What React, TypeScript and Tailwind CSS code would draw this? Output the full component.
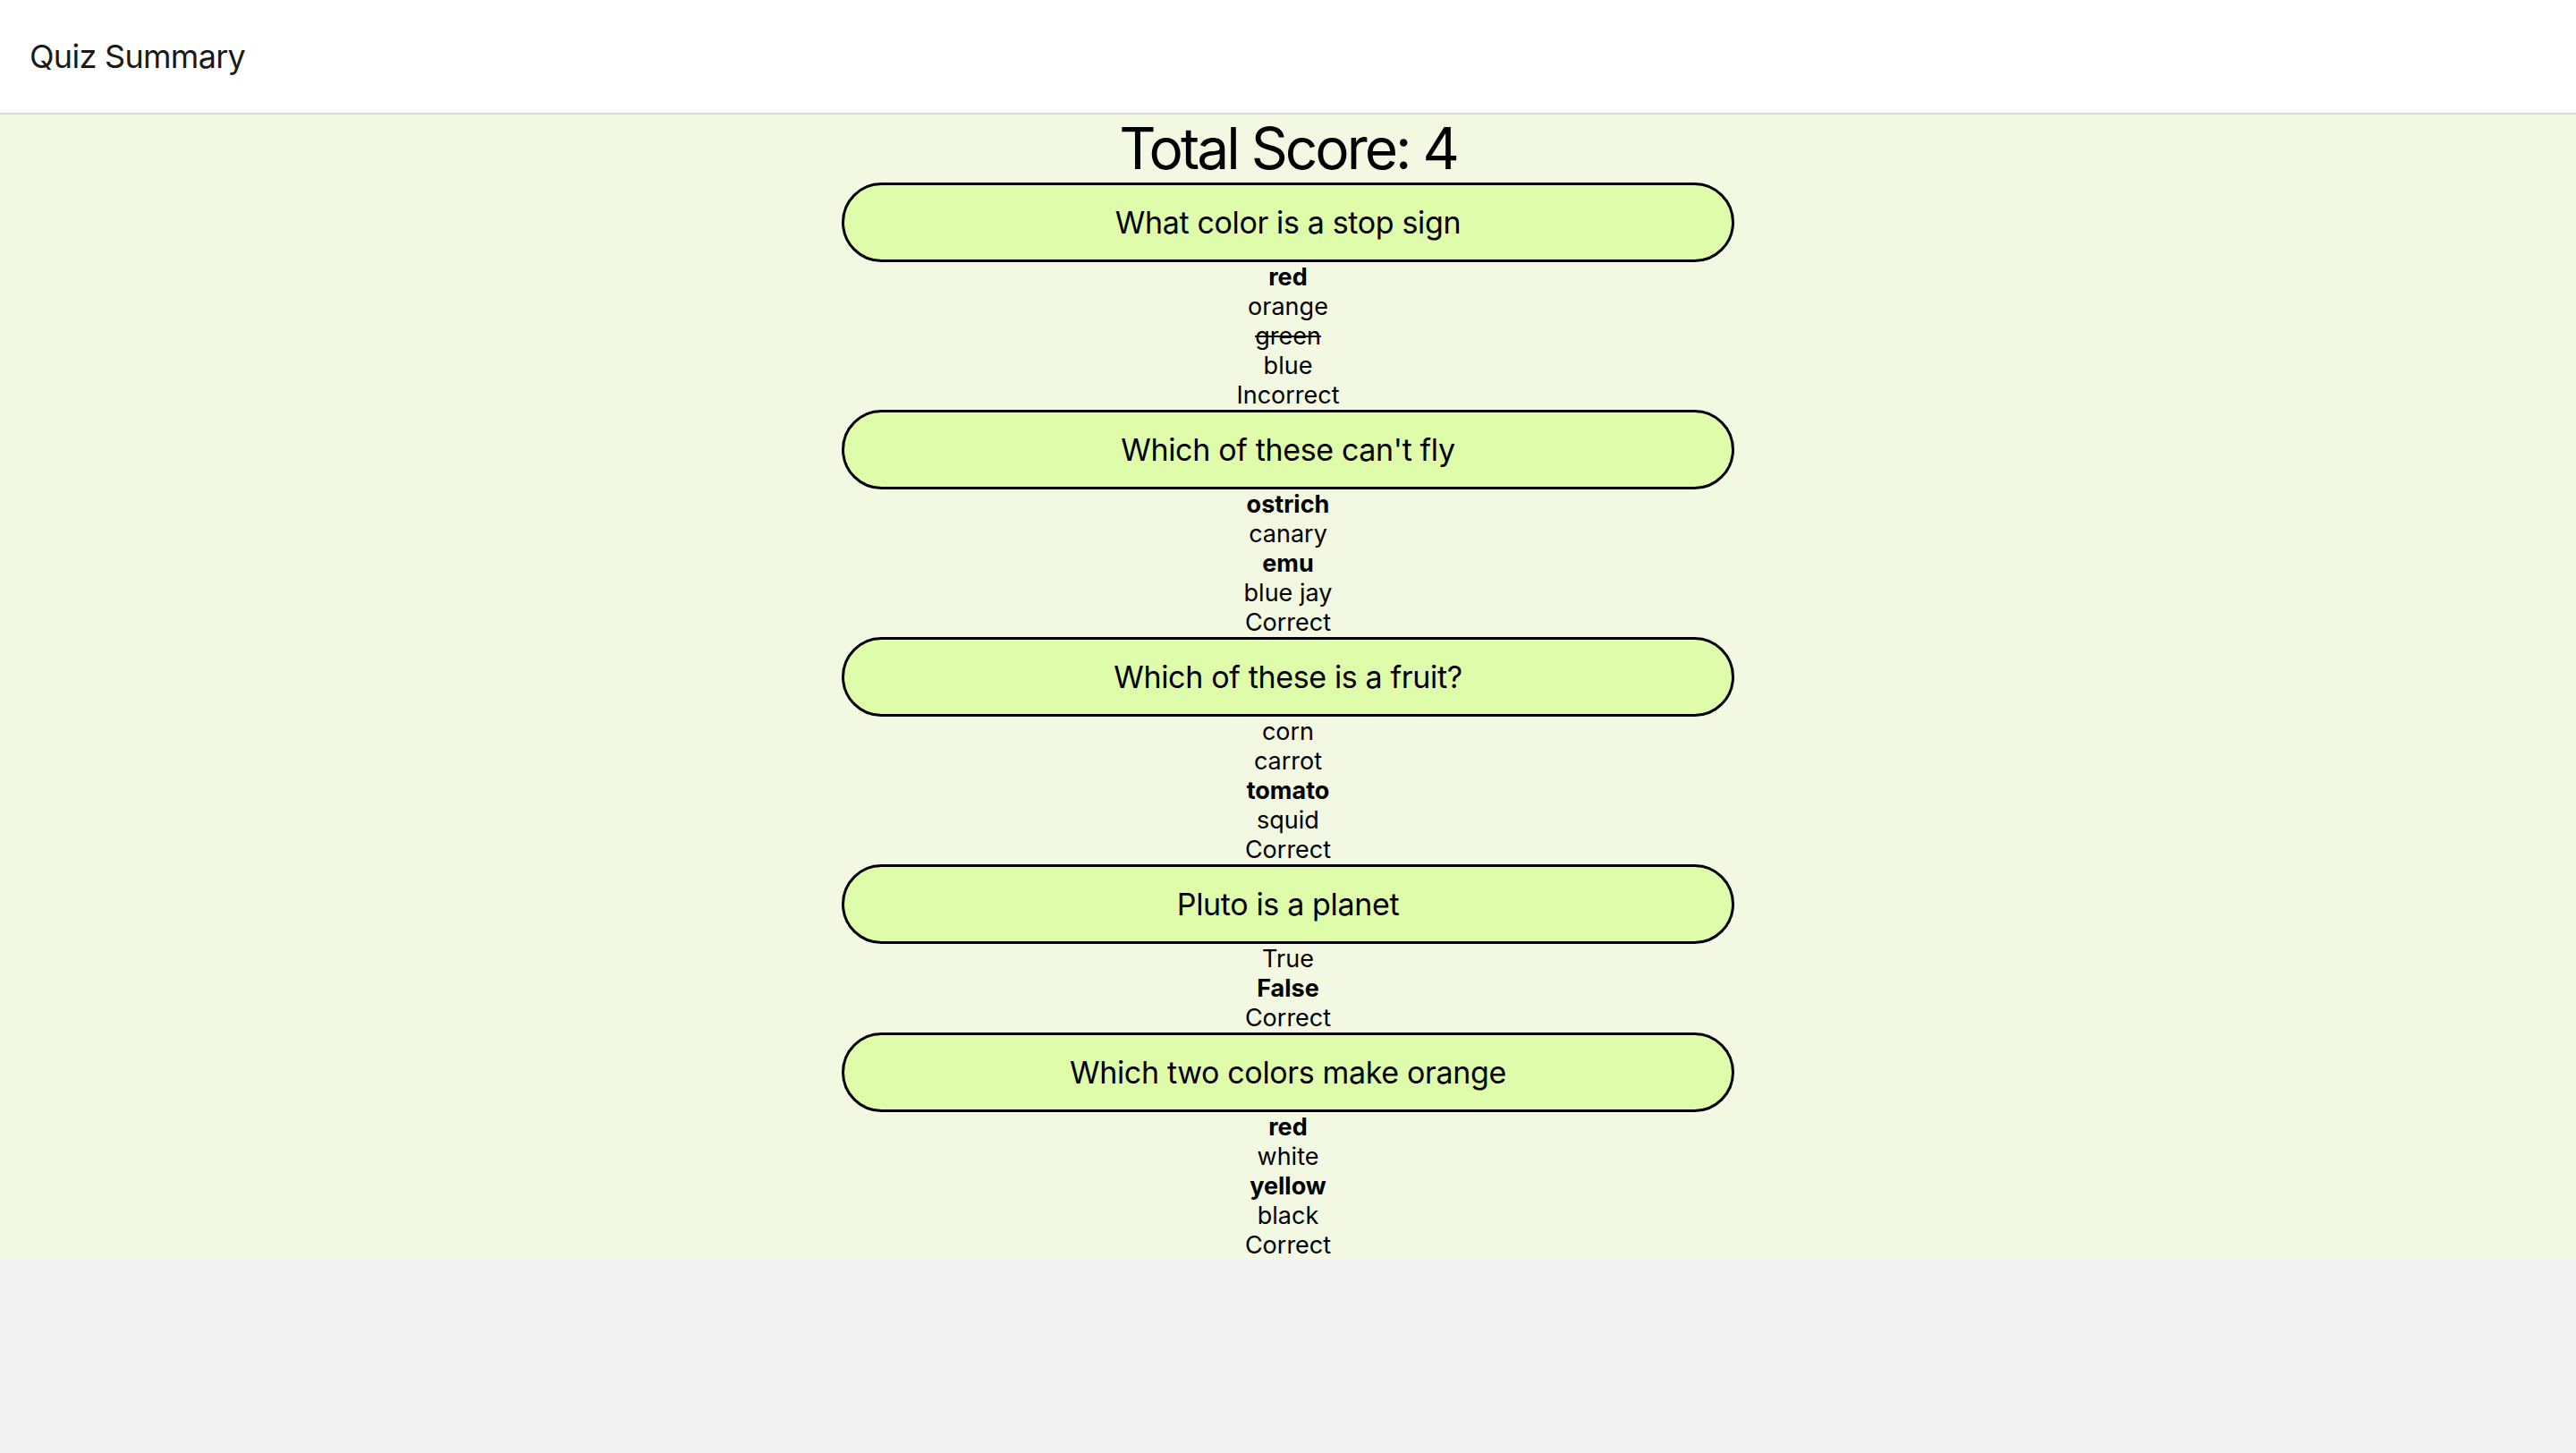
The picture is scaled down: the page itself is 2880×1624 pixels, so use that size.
import React from "react";

type Answer = { text: string; bold?: boolean; strike?: boolean };
type Q = { question: string; answers: Answer[]; result: string };

const data: Q[] = [
  {
    question: "What color is a stop sign",
    answers: [
      { text: "red", bold: true },
      { text: "orange" },
      { text: "green", strike: true },
      { text: "blue" },
    ],
    result: "Incorrect",
  },
  {
    question: "Which of these can't fly",
    answers: [
      { text: "ostrich", bold: true },
      { text: "canary" },
      { text: "emu", bold: true },
      { text: "blue jay" },
    ],
    result: "Correct",
  },
  {
    question: "Which of these is a fruit?",
    answers: [
      { text: "corn" },
      { text: "carrot" },
      { text: "tomato", bold: true },
      { text: "squid" },
    ],
    result: "Correct",
  },
  {
    question: "Pluto is a planet",
    answers: [{ text: "True" }, { text: "False", bold: true }],
    result: "Correct",
  },
  {
    question: "Which two colors make orange",
    answers: [
      { text: "red", bold: true },
      { text: "white" },
      { text: "yellow", bold: true },
      { text: "black" },
    ],
    result: "Correct",
  },
];

export default function App() {
  return (
    <div
      className="min-h-screen bg-[#f2f2f2] text-black"
      style={{ fontFamily: "Inter, 'Noto Sans', sans-serif" }}
    >
      <header className="h-[128px] bg-white border-b-2 border-[#d9d9d9] flex items-center px-[33px]">
        <span className="text-[36px] tracking-[-0.7px] text-[#1a1a1a]">Quiz Summary</span>
      </header>
      <main className="bg-[#f3f8e2] flex flex-col items-center">
        <h1 className="text-[64px] leading-[76px] font-normal tracking-[-3px]">Total Score: 4</h1>
        {data.map((q, i) => (
          <div key={i} className="flex flex-col items-center">
            <div className="w-[998px] border-[3px] border-black rounded-full bg-[#dffcaa] py-[21px] text-center text-[34px] leading-[41px] tracking-[-0.35px]">
              {q.question}
            </div>
            <div className="flex flex-col items-center text-[27px] leading-[33px]">
              {q.answers.map((a, j) => (
                <span
                  key={j}
                  className={
                    (a.bold ? "font-bold " : "") + (a.strike ? "line-through" : "")
                  }
                >
                  {a.text}
                </span>
              ))}
              <span>{q.result}</span>
            </div>
          </div>
        ))}
      </main>
    </div>
  );
}
